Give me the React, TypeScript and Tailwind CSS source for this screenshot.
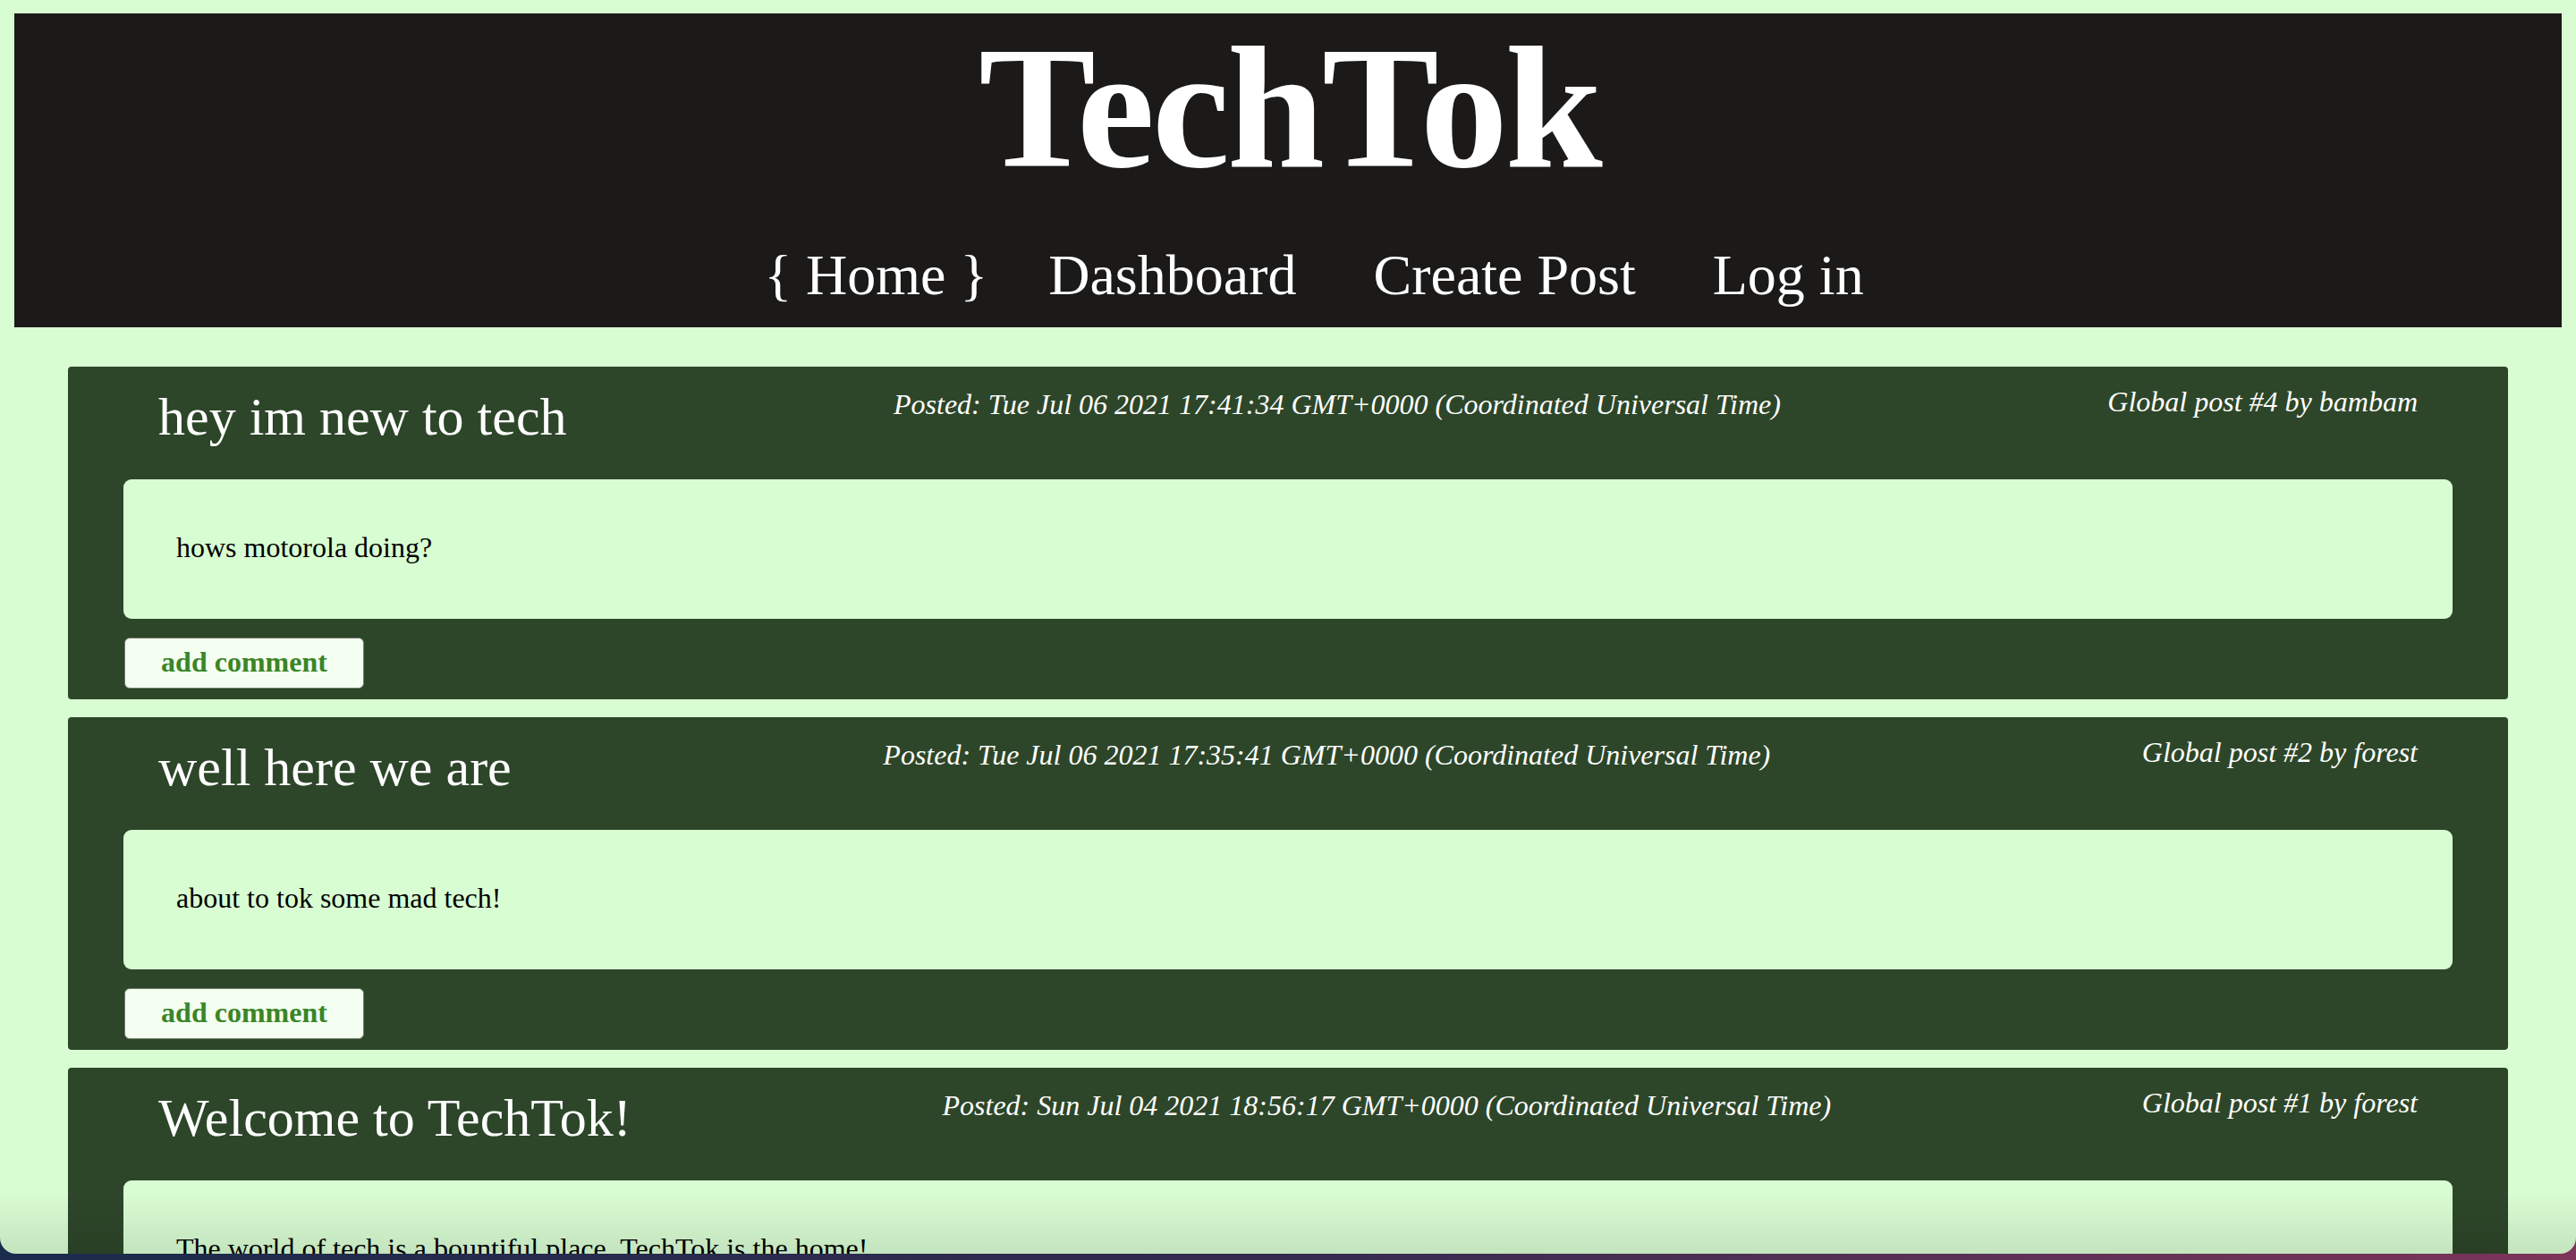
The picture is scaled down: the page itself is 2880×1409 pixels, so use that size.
import React from "react";

type Post = {
  title: string;
  posted: string;
  global: string;
  body: string;
};

const posts: Post[] = [
  {
    title: "hey im new to tech",
    posted: "Posted: Tue Jul 06 2021 17:41:34 GMT+0000 (Coordinated Universal Time)",
    global: "Global post #4 by bambam",
    body: "hows motorola doing?",
  },
  {
    title: "well here we are",
    posted: "Posted: Tue Jul 06 2021 17:35:41 GMT+0000 (Coordinated Universal Time)",
    global: "Global post #2 by forest",
    body: "about to tok some mad tech!",
  },
  {
    title: "Welcome to TechTok!",
    posted: "Posted: Sun Jul 04 2021 18:56:17 GMT+0000 (Coordinated Universal Time)",
    global: "Global post #1 by forest",
    body: "The world of tech is a bountiful place. TechTok is the home!",
  },
];

function PostCard({ post }: { post: Post }) {
  return (
    <article className="bg-[#2d4629] rounded-[4px] pt-[26px] pb-[12px]">
      <div className="flex justify-between items-start px-[101px] text-white">
        <h2 className="text-[60px] leading-[60px] font-normal">{post.title}</h2>
        <span className="italic text-[32px] leading-[32px]">{post.posted}</span>
        <span className="italic text-[32px] leading-[32px] -mt-[3px]">{post.global}</span>
      </div>
      <div className="mt-[40px] mx-[62px] h-[156px] rounded-[9px] bg-[#d9fdd3] pl-[59px] pt-[58px]">
        <p className="text-black text-[32px] leading-[36px]">{post.body}</p>
      </div>
      <div className="mt-[21px] ml-[63px]">
        <button className="w-[268px] h-[57px] rounded-[6px] border border-[#6f7f6c] bg-[#f4fff1] text-[#3b8527] font-bold text-[32px] leading-[32px] flex items-center justify-center pb-[3px]">
          add comment
        </button>
      </div>
    </article>
  );
}

export default function App() {
  return (
    <div
      className="w-[2880px] h-[1409px] overflow-hidden bg-gradient-to-r from-[#1b2b4b] via-[#342a50] to-[#7d3459]"
      style={{ fontFamily: '"Liberation Serif", "Times New Roman", serif' }}
    >
      <div className="relative h-[1402px] overflow-hidden rounded-b-[18px] bg-[#d9fdd3]">
        <header className="mx-[16px] mt-[15px] h-[351px] bg-[#1b1a19] pt-[7px] text-white">
          <h1 className="text-center font-bold text-[196px] leading-[196px] tracking-[-3px] pl-[3px]">
            TechTok
          </h1>
          <nav className="mt-[58px] flex justify-center pl-[58px] text-[64px] leading-[63px]">
            <a className="whitespace-pre">{"{ Home }"}</a>
            <a className="ml-[68px]">Dashboard</a>
            <a className="ml-[86px]">Create Post</a>
            <a className="ml-[86px]">Log in</a>
          </nav>
        </header>
        <main className="mx-[76px] mt-[44px] flex flex-col gap-[20px]">
          {posts.map((p) => (
            <PostCard key={p.global} post={p} />
          ))}
        </main>
        <div className="pointer-events-none absolute bottom-0 left-0 right-0 h-[70px] bg-gradient-to-b from-transparent to-black/10" />
      </div>
    </div>
  );
}
